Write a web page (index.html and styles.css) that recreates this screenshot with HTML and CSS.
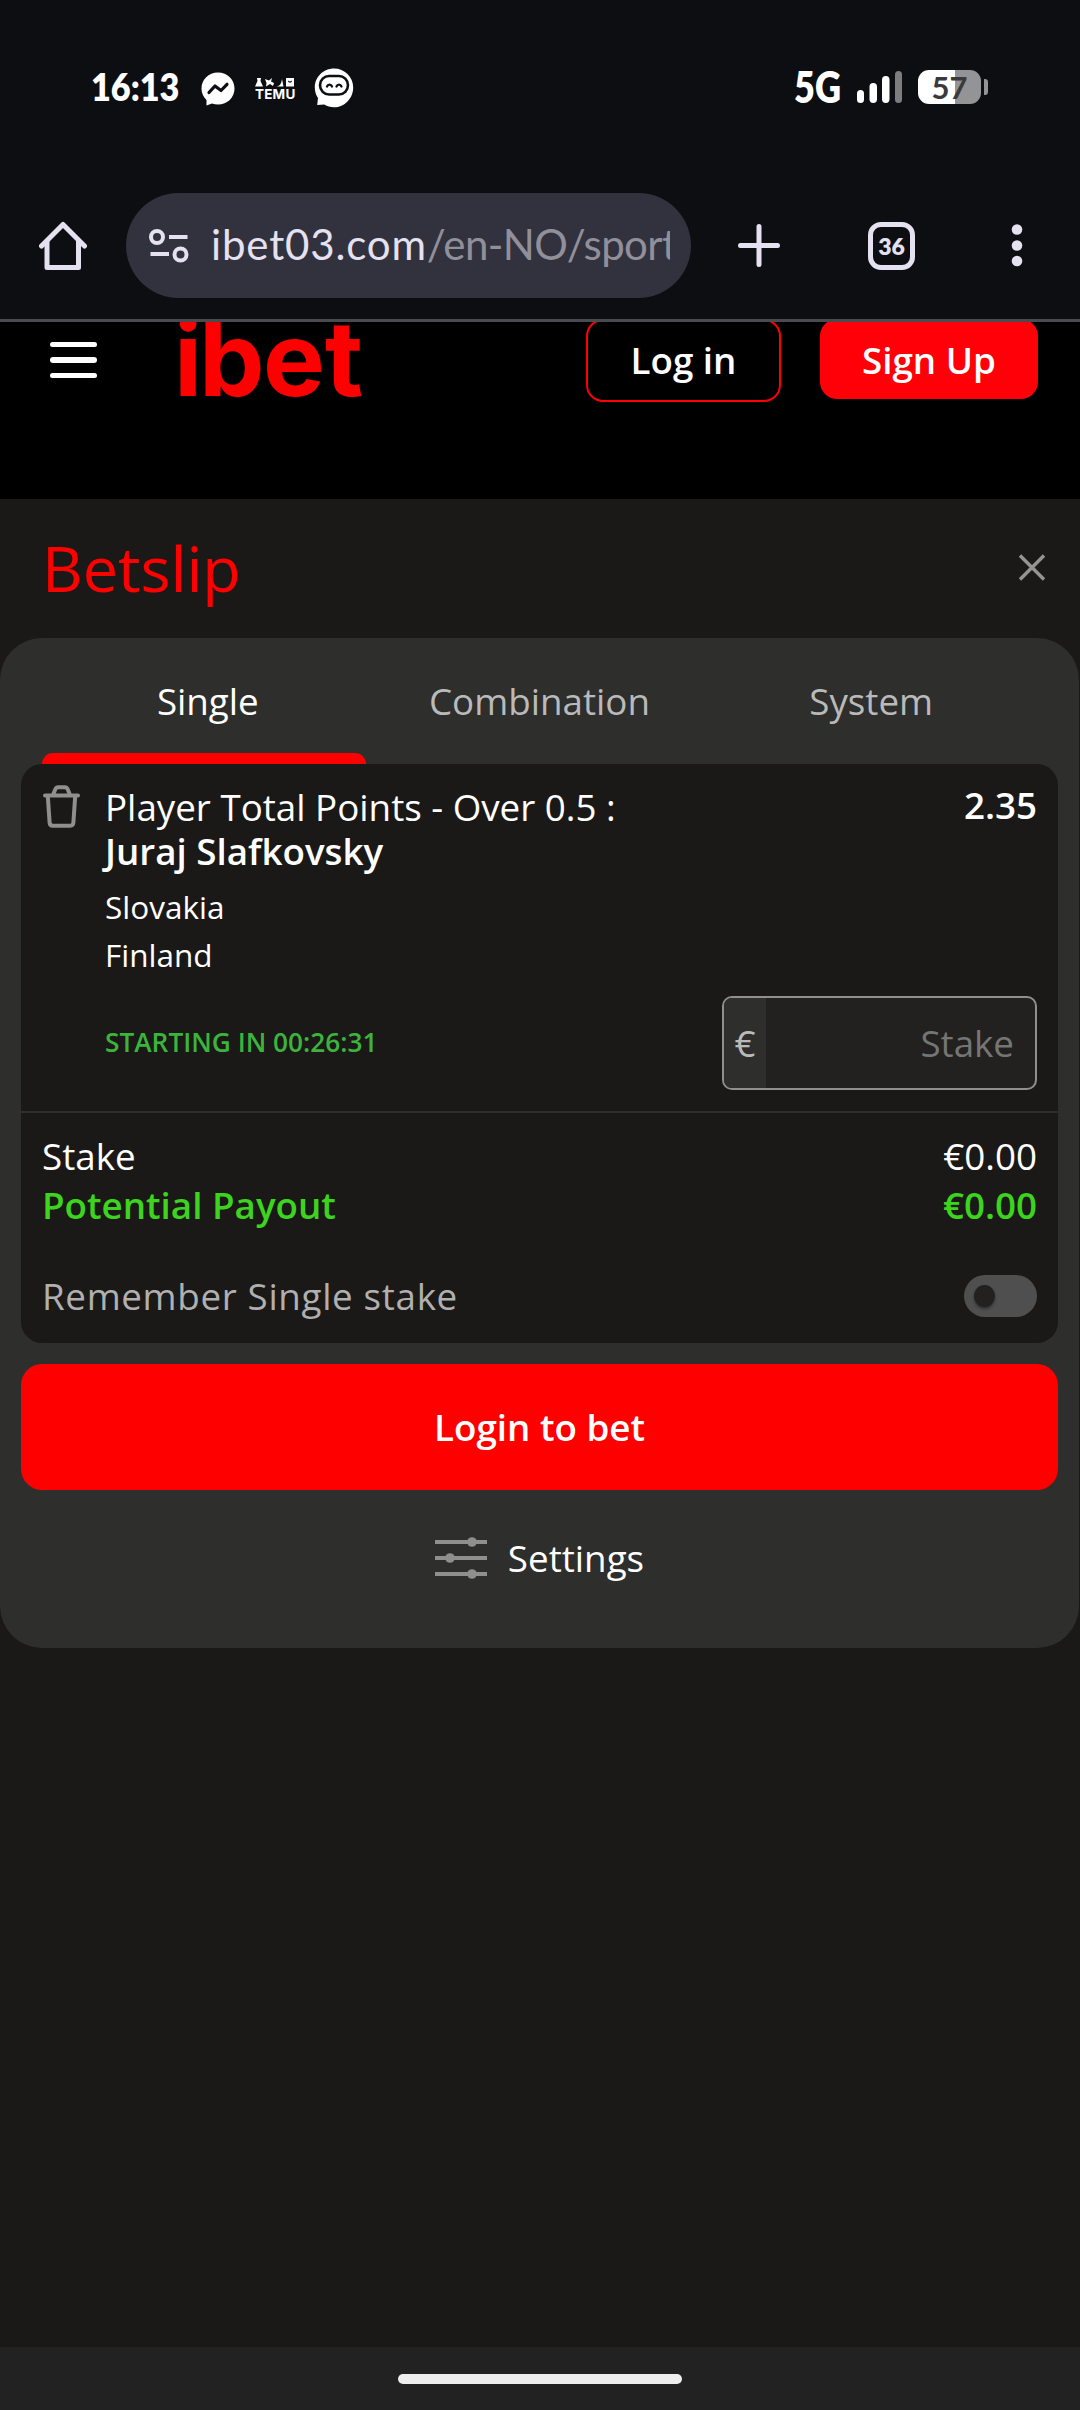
FILE: index.html
```html
<!DOCTYPE html>
<html lang="en">
<head>
<meta charset="utf-8">
<title>Betslip</title>
<link rel="stylesheet" href="styles.css">
</head>
<body>
<div class="screen">
  <div class="status">
    <span class="clock">16:13</span>
    <svg class="st-messenger" width="34" height="34" viewBox="0 0 34 34"><path fill="#fff" d="M17 0.5C7.500.5.5 7.500.5 16.500c0 4.600 1.800 8.500 5 11.500v5.500l5.500-2c1.900.6 3.900 1 6 1 9.500 0 16.500-7 16.500-16S26.500.5 17 .5z"/><path fill="none" stroke="#0d0e12" stroke-width="3.200" stroke-linejoin="round" stroke-linecap="round" d="M8 20.500l6-6.500 6 4.500 6-6.200"/></svg>
    <span class="temu">
      <svg width="39" height="9" viewBox="0 0 39 9"><g fill="#fff"><path d="M2 0h4l-.5 3L8 8.500H0L2.500 3z"/><path d="M10 1l4 1.500L17 0l-1 3.500 3 1.500-1 3-3-2-4 2.500.5-3.500z"/><path d="M20 8.500c5 0 6-2 7-7.500l1.500 7.500z"/><path fill-rule="evenodd" d="M31 0h8v8.500h-8zM33 2.500c0 3 4 3 4 0l-2 1z"/></g></svg>
      <span>TEMU</span>
    </span>
    <svg class="st-bot" width="40" height="40" viewBox="0 0 40 40"><path fill="#fff" d="M20 .5C9.500.5.8 9 .8 19.500c0 4 1.200 7.500 3.200 10.500L3.200 37l7-.5c3 1.800 6.300 2.800 9.800 2.800 10.500 0 19.200-9 19.200-19.800S30.500.5 20 .5z"/><rect x="6" y="8" width="28" height="18.500" rx="9.200" fill="#fff" stroke="#0d0e12" stroke-width="2.600"/><path fill="none" stroke="#0d0e12" stroke-width="2.300" stroke-linecap="round" d="M13 18.500c1-2.500 4-2.500 5 0M22.500 18.500c1-2.500 4-2.500 5 0"/></svg>
    <span class="net">5G</span>
    <svg class="signal" width="46" height="33" viewBox="0 0 46 33"><g fill="#fff"><rect x="0" y="19" width="7" height="13" rx="3.500"/><rect x="12.500" y="12" width="7.500" height="20" rx="3.700"/><rect x="25" y="5" width="7.500" height="27" rx="3.700"/><rect x="38" y="0" width="7" height="32" rx="3.500" fill="#7d7d80"/></g></svg>
    <span class="battery">57</span><i class="battery-tip"></i>
  </div>

  <div class="browser">
    <svg class="home" width="48" height="49" viewBox="0 0 48 49" fill="none" stroke="#e5e1f0" stroke-width="5" stroke-linejoin="round"><path stroke-linecap="round" d="M2.500 25L24 3.500 45.500 25"/><path d="M8 20v26.500h31.500V20"/></svg>
    <div class="omnibox">
      <svg width="40" height="34" viewBox="0 0 40 34" fill="none" stroke="#e5e1f0" stroke-width="4"><circle cx="8" cy="8" r="6"/><path d="M20 8h18.500M1.500 25H20"/><circle cx="31.500" cy="25.500" r="6"/></svg>
      <div class="url">ibet03.com<span>/en-NO/sport</span></div>
    </div>
    <svg class="plus" width="42" height="43" viewBox="0 0 42 43" stroke="#e5e1f0" stroke-width="5" stroke-linecap="round"><path d="M21 2.500v38M2.500 21.500h37"/></svg>
    <span class="tabcount">36</span>
    <svg class="dots" width="12" height="43" viewBox="0 0 12 43" fill="#e5e1f0"><circle cx="6" cy="5.500" r="5.300"/><circle cx="6" cy="21.500" r="5.300"/><circle cx="6" cy="37" r="5.300"/></svg>
  </div>

  <header class="site">
    <svg class="burger" width="47" height="36" viewBox="0 0 47 36" fill="#fff"><rect width="47" height="5" rx="2.500"/><rect y="15" width="47" height="6" rx="3"/><rect y="31" width="47" height="5" rx="2.500"/></svg>
    <svg class="logo" width="190" height="90" viewBox="0 0 190 90"><text x="-5 20 84 146" y="74">ibet</text></svg>
    <button class="btn-login">Log in</button>
    <button class="btn-signup">Sign Up</button>
  </header>

  <main class="slip">
    <div class="slip-head">
      <h1>Betslip</h1>
      <svg class="close" width="26" height="27" viewBox="0 0 26 27" stroke="#949494" stroke-width="3.400"><path d="M1 1.500l24 24M25 1.500l-24 24"/></svg>
    </div>
    <section class="panel">
      <nav class="tabs">
        <span class="tab active">Single</span>
        <span class="tab">Combination</span>
        <span class="tab">System</span>
      </nav>
      <div class="card">
        <div class="bet">
          <svg class="trash" width="37" height="43" viewBox="0 0 37 43" fill="none" stroke="#8f8f8f" stroke-width="4" stroke-linejoin="round" stroke-linecap="round"><path d="M2 10.500h33M10 10l2.200-5.500q1-2.200 3-2.200h6.600q2 0 3 2.200L27 10"/><path d="M4.800 11l1.800 26.500q.2 3.200 3.200 3.200h17.400q3 0 3.200-3.200L32.200 11"/></svg>
          <div class="pick">
            <div class="market">Player Total Points - Over 0.5 :</div>
            <div class="player">Juraj Slafkovsky</div>
            <div class="team">Slovakia</div>
            <div class="team">Finland</div>
          </div>
          <div class="odds">2.35</div>
        </div>
        <div class="stake-row">
          <span class="starting">STARTING IN 00:26:31</span>
          <div class="field"><span class="cur">€</span><span class="ph">Stake</span></div>
        </div>
        <div class="summary">
          <div class="line"><span>Stake</span><span>€0.00</span></div>
          <div class="line payout"><span>Potential Payout</span><span>€0.00</span></div>
          <div class="remember"><span>Remember Single stake</span><i class="toggle"></i></div>
        </div>
      </div>
      <button class="cta">Login to bet</button>
      <div class="settings">
        <svg width="52" height="42" viewBox="0 0 52 42" fill="#8f8f8f"><path d="M0 3h52v4H0zM0 19h52v4H0zM0 35h52v4H0z"/><circle cx="37" cy="5" r="4.800"/><circle cx="15" cy="21" r="4.800"/><circle cx="37" cy="37" r="4.800"/></svg>
        <span>Settings</span>
      </div>
    </section>
  </main>
  <footer class="gesture"><i></i></footer>
</div>
</body>
</html>
```
FILE: styles.css
```css
* { box-sizing: border-box; }
body { margin: 0; background: #1a1917; color: #fff; font-family: "Open Sans", "Noto Sans", sans-serif; font-size: 36.75px; }
svg { display: block; flex: none; }
button { border: 0; padding: 0; color: #fff; font: inherit; font-weight: 600; }
.screen { width: 1080px; height: 2410px; display: flex; flex-direction: column; overflow: hidden; }

/* Status bar */
.status { height: 176px; background: #0d0e12; display: flex; align-items: flex-start; padding: 64px 0 0 91px; font-family: Lato, sans-serif; font-weight: 800; }
.clock { width: 110px; font-size: 38px; line-height: 44px; white-space: nowrap; transform: scaleX(.9); transform-origin: 0 0; }
.st-messenger { margin-top: 8px; }
.temu { margin: 14px 0 0 20px; width: 40px; font-family: Inter, sans-serif; font-size: 13.500px; font-weight: 700; line-height: 14px; letter-spacing: .2px; }
.temu span { display: block; line-height: 15px; }
.st-bot { margin: 4px 0 0 19px; }
.net { margin-left: 440px; width: 63px; font-size: 43px; line-height: 46px; transform: scaleX(.84); transform-origin: 0 0; }
.signal { margin-top: 7px; }
.battery { margin: 6px 0 0 15px; width: 63px; height: 34px; border-radius: 11px; background: linear-gradient(90deg, #fff 37px, #949496 37px); color: #3a3a3c; text-align: center; font: 700 31px/34px Lato, sans-serif; }
.battery-tip { margin: 15px 0 0 3px; width: 4px; height: 16px; border-radius: 0 3px 3px 0; background: #949496; }

/* Browser toolbar */
.browser { height: 146px; background: #0d0e12; border-bottom: 3px solid #4a4a52; display: flex; align-items: center; padding: 0 57px 4px 39px; }
.omnibox { margin-left: 39px; width: 565px; height: 105px; border-radius: 53px; background: #31323e; display: flex; align-items: center; padding-left: 23px; }
.url { margin: -4px 0 0 22px; width: 459px; overflow: hidden; white-space: nowrap; font: 400 42px/60px Lato, sans-serif; color: #e5e1f0; letter-spacing: .85px; }
.url span { color: #918f9a; letter-spacing: -.6px; }
.plus { margin-left: 47px; }
.tabcount { margin-left: 88px; width: 47px; height: 48px; border: 5px solid #e5e1f0; border-radius: 13px; color: #e5e1f0; text-align: center; font: 800 23px/38px Lato, sans-serif; }
.dots { margin-left: 96px; }

/* Site header, partly scrolled under the toolbar */
.site { height: 177px; background: #000; display: flex; align-items: flex-start; overflow: hidden; padding-left: 50px; }
.burger { margin-top: 20px; }
.logo { margin-left: 82px; }
.logo text { font: 700 104px Inter, sans-serif; fill: #f00; }
.btn-login { margin: -3px 0 0 217px; width: 195px; height: 83px; border: 2px solid #f00; border-radius: 17px; background: #000; line-height: 76px; padding-bottom: 2px; }
.btn-signup { margin: -3px 0 0 39px; width: 218px; height: 80px; border-radius: 17px; background: #ff0009; line-height: 78px; padding-top: 2px; }

/* Betslip */
.slip { height: 1848px; padding-right: 1px; }
.slip-head { height: 139px; display: flex; justify-content: space-between; align-items: center; padding: 0 34px 2px 42px; }
h1 { margin: 0; color: #f00; font-size: 63px; line-height: 86px; font-weight: 400; }
.panel { height: 1010px; background: #2e2e2c; border-radius: 42px; padding: 0 21px; }
.tabs { height: 126px; display: grid; grid-template-columns: repeat(3, 1fr); padding: 0 21px; }
.tab { text-align: center; line-height: 126px; color: #bababa; }
.tab.active { color: #fff; display: flex; flex-direction: column; }
.tab.active::after { content: ""; margin-top: -11px; width: 324px; height: 11px; flex: none; border-radius: 11px 11px 0 0; background: #f00; }
.card { height: 579px; border-radius: 21px; background: #1a1917; }
.bet { height: 232px; display: flex; align-items: flex-start; padding: 21px 21px 0; }
.trash { margin-left: 1px; }
.pick { margin-left: 25px; flex: 1; white-space: nowrap; }
.market, .player { line-height: 44px; }
.player { font-weight: 600; margin-bottom: 10px; }
.team { font-size: 31.500px; line-height: 48px; }
.odds { font-weight: 600; line-height: 40px; }
.stake-row { height: 115px; display: flex; align-items: flex-start; justify-content: space-between; padding: 0 21px 0 84px; }
.starting { color: #3cb43c; font-size: 26.250px; font-weight: 600; line-height: 92px; }
.field { width: 315px; height: 94px; border: 2px solid #8f8f8f; border-radius: 10px; background: #22211f; display: flex; overflow: hidden; line-height: 90px; }
.cur { width: 42px; background: #2e2e2c; color: #bababa; text-align: center; }
.ph { flex: 1; text-align: right; padding-right: 21px; color: #757575; }
.summary { border-top: 2px solid #2e2e2c; padding: 19px 21px 0; }
.line { display: flex; justify-content: space-between; line-height: 49px; }
.payout { color: #3cd41e; font-weight: 600; }
.remember { margin-top: 45px; height: 42px; display: flex; justify-content: space-between; align-items: center; color: #b0b0b0; letter-spacing: .66px; }
.toggle { width: 73px; height: 42px; border-radius: 21px; background: #4f4f4f; padding: 10px; }
.toggle::after { content: ""; display: block; width: 21px; height: 22px; border-radius: 50%; background: #22211f; box-shadow: 0 2px 3px #0006; }
.cta { display: block; margin-top: 21px; width: 100%; height: 126px; border-radius: 21px; background: #f00; }
.settings { height: 136px; display: flex; justify-content: center; align-items: center; gap: 21px; }

/* Gesture bar */
.gesture { height: 63px; background: #222; display: flex; justify-content: center; align-items: center; }
.gesture i { width: 284px; height: 10px; border-radius: 5px; background: #eee; }
```
